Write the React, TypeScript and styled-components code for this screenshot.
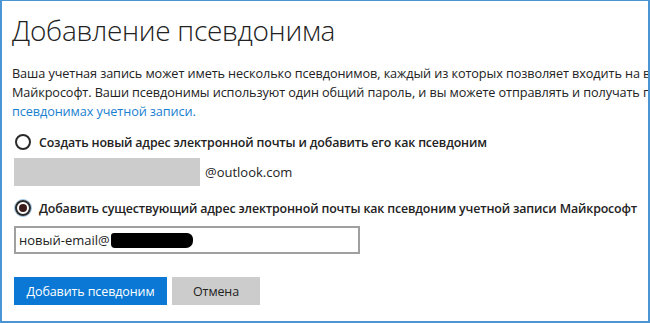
import React from "react";
import styled, { createGlobalStyle } from "styled-components";

const Global = createGlobalStyle`
  html, body { margin: 0; padding: 0; background: #fff; }
  body { font-family: "Open Sans", "Noto Sans", sans-serif; color: #222; }
`;

const Frame = styled.div`
  box-sizing: border-box;
  width: 650px;
  height: 323px;
  border-style: solid;
  border-color: #4b95d4;
  border-width: 1px 2px 2px 2px;
  padding: 11px 0 0 10px;
  overflow: hidden;
  display: flex;
  flex-direction: column;
`;

const Title = styled.h1`
  margin: 0;
  font-family: "Open Sans", sans-serif;
  font-weight: 300;
  font-size: 28px;
  line-height: 36px;
  color: #222;
  letter-spacing: -0.3px;
`;

const Para = styled.div`
  margin-top: 16px;
  display: flex;
  flex-direction: column;
  font-size: 12.7px;
  line-height: 19px;
  color: #222;
  letter-spacing: -0.1px;
`;

const Line = styled.div<{ $link?: boolean }>`
  white-space: nowrap;
  overflow: hidden;
  color: ${(p) => (p.$link ? "#1a7fd0" : "#222")};
`;

const Options = styled.div`
  margin-top: 12px;
  display: flex;
  flex-direction: column;
`;

const RadioRow = styled.label`
  display: flex;
  align-items: center;
  gap: 7px;
  height: 18px;
  font-size: 12.4px;
  font-weight: 600;
  color: #222;
  white-space: nowrap;
  letter-spacing: -0.15px;
`;

const Radio = styled.span<{ $checked?: boolean }>`
  box-sizing: border-box;
  position: relative;
  width: 18px;
  height: 18px;
  border-radius: 50%;
  display: flex;
  align-items: center;
  justify-content: center;
  border: ${(p) => (p.$checked ? "1px solid #9cc6ea" : "none")};
  background: ${(p) => (p.$checked ? "#e8f2fb" : "transparent")};
  margin-left: 2px;
  &::before {
    content: "";
    box-sizing: border-box;
    width: 16px;
    height: 16px;
    border-radius: 50%;
    border: 2px solid #2a2a2a;
    background: #fff;
  }
  &::after {
    content: "";
    display: ${(p) => (p.$checked ? "block" : "none")};
    position: absolute;
    left: 50%;
    top: 50%;
    width: 8px;
    height: 8px;
    margin: -4px 0 0 -4px;
    border-radius: 50%;
    background: #3a1a1a;
  }
`;

const FieldRow = styled.div`
  display: flex;
  align-items: center;
  gap: 5px;
  margin: 7px 0 0 2px;
  font-size: 13px;
  color: #222;
`;

const GrayBox = styled.div`
  width: 186px;
  height: 28px;
  background: #cccccc;
`;

const TextBox = styled.div`
  box-sizing: border-box;
  width: 346px;
  height: 28px;
  border: 2px solid #a0a0a0;
  background: #fff;
  display: flex;
  align-items: center;
  padding-left: 3px;
  font-size: 13px;
  color: #222;
  margin: 9px 0 0 2px;
`;

const Redacted = styled.span`
  display: inline-block;
  width: 82px;
  height: 15px;
  background: #000;
  border-radius: 3px 6px 7px 4px;
  margin-left: 1px;
`;

const Spacer = styled.div`
  height: 13px;
`;

const Buttons = styled.div`
  display: flex;
  gap: 5px;
  margin: 23px 0 0 2px;
`;

const Button = styled.button<{ $primary?: boolean }>`
  height: 28px;
  border: none;
  padding: 0;
  width: ${(p) => (p.$primary ? "153px" : "88px")};
  background: ${(p) => (p.$primary ? "#0a78d4" : "#cccccc")};
  color: ${(p) => (p.$primary ? "#fff" : "#222")};
  font-family: "Open Sans", sans-serif;
  font-size: 12.5px;
  letter-spacing: -0.1px;
`;

export default function App() {
  return (
    <>
      <Global />
      <Frame>
        <Title>Добавление псевдонима</Title>
        <Para>
          <Line>
            Ваша учетная запись может иметь несколько псевдонимов, каждый из которых позволяет входить на все службы
          </Line>
          <Line>
            Майкрософт. Ваши псевдонимы используют один общий пароль, и вы можете отправлять и получать почту с каждого из них.
          </Line>
          <Line $link>псевдонимах учетной записи.</Line>
        </Para>
        <Options>
          <RadioRow>
            <Radio />
            Создать новый адрес электронной почты и добавить его как псевдоним
          </RadioRow>
          <FieldRow>
            <GrayBox />
            @outlook.com
          </FieldRow>
          <Spacer />
          <RadioRow>
            <Radio $checked />
            Добавить существующий адрес электронной почты как псевдоним учетной записи Майкрософт
          </RadioRow>
          <TextBox>
            новый-email@
            <Redacted />
          </TextBox>
        </Options>
        <Buttons>
          <Button $primary>Добавить псевдоним</Button>
          <Button>Отмена</Button>
        </Buttons>
      </Frame>
    </>
  );
}
